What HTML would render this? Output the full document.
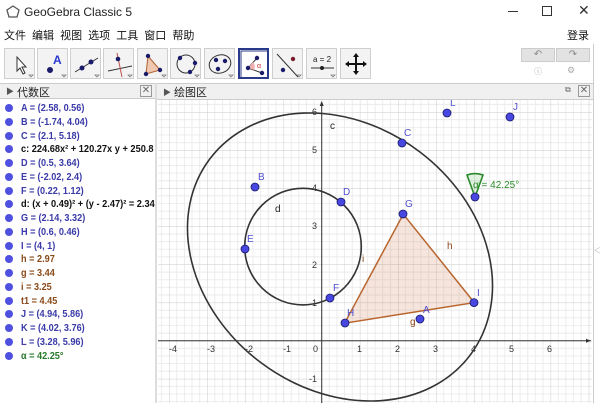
<!DOCTYPE html>
<html><head><meta charset="utf-8"><style>
*{margin:0;padding:0;box-sizing:border-box}
html,body{width:600px;height:403px;overflow:hidden}
body{background:#fff;font-family:"Liberation Sans","Noto Sans CJK SC",sans-serif;position:relative}
.a{position:absolute}
.btn{position:absolute;top:48px;width:31px;height:31px;background:#f3f3f3;border:1px solid #cfcfcf}
.btn svg{position:absolute;left:0;top:0}
.row{position:absolute;left:5px;font-size:10.5px;font-weight:bold;height:14px;line-height:14px;white-space:nowrap;overflow:hidden;width:150px}
.row:before{content:"";position:absolute;left:0;top:3px;width:8px;height:8px;border-radius:50%;background:#5050e0}
.row span{position:absolute;left:16px;top:0;transform:scaleX(0.87);transform-origin:0 0}
.row span.n{transform:scaleX(0.88)}
.b{color:#3a3aa8}.k{color:#111}.o{color:#8a4a1a}.g{color:#2a7a2a}
</style></head><body>
<div class="a" style="left:0;top:0;width:600px;height:25px;background:#fff"></div>
<svg class="a" style="left:6px;top:5px" width="14" height="14"><polygon points="7,1 13,5 11,12 3,12 1,5" fill="none" stroke="#555" stroke-width="1.3"/></svg>
<div class="a" style="left:24px;top:5px;font-size:12px;color:#222">GeoGebra Classic 5</div>
<div class="a" style="left:508px;top:11px;width:10px;height:1px;background:#333"></div>
<div class="a" style="left:542px;top:6px;width:10px;height:10px;border:1px solid #333"></div>
<div class="a" style="left:578px;top:2px;font-size:14px;color:#333">✕</div>
<div class="a" style="left:4px;top:27px;font-size:11px;color:#111;word-spacing:3px">文件 编辑 视图 选项 工具 窗口 帮助</div>
<div class="a" style="left:567px;top:27px;font-size:11px;color:#111">登录</div>
<div class="btn" style="left:4px"><svg width="31" height="31"><path d="M12 8 L12 22 L15 19 L18 25 L20 24 L17 18 L21 18 Z" fill="#fff" stroke="#333"/><path d="M24 26l2 2 2-2z" fill="none" stroke="#777" stroke-width=".7"/></svg></div>
<div class="btn" style="left:37px"><svg width="31" height="31"><circle cx="12" cy="21" r="3" fill="#1a1a6a"/><text x="15" y="15" font-size="12" font-weight="bold" fill="#2a3ad0" font-family="Liberation Sans">A</text><path d="M24 26l2 2 2-2z" fill="none" stroke="#777" stroke-width=".7"/></svg></div>
<div class="btn" style="left:70px"><svg width="31" height="31"><line x1="4" y1="23" x2="27" y2="9" stroke="#333"/><circle cx="11" cy="19" r="2.5" fill="#1a1a6a"/><circle cx="20" cy="13" r="2.5" fill="#1a1a6a"/><path d="M24 26l2 2 2-2z" fill="none" stroke="#777" stroke-width=".7"/></svg></div>
<div class="btn" style="left:103px"><svg width="31" height="31"><line x1="4" y1="22" x2="28" y2="17" stroke="#333"/><line x1="13" y1="4" x2="18" y2="28" stroke="#c05050"/><circle cx="14" cy="10" r="2.3" fill="#1a1a6a"/><path d="M24 26l2 2 2-2z" fill="none" stroke="#777" stroke-width=".7"/></svg></div>
<div class="btn" style="left:137px"><svg width="31" height="31"><polygon points="10,7 22,21 8,25" fill="#f0c8b0" stroke="#b06030"/><circle cx="10" cy="7" r="2.2" fill="#1a1a6a"/><circle cx="22" cy="21" r="2.2" fill="#1a1a6a"/><circle cx="8" cy="25" r="2.2" fill="#1a1a6a"/><path d="M24 26l2 2 2-2z" fill="none" stroke="#777" stroke-width=".7"/></svg></div>
<div class="btn" style="left:170px"><svg width="31" height="31"><circle cx="15" cy="15" r="9" fill="none" stroke="#333"/><circle cx="9" cy="9" r="2.2" fill="#1a1a6a"/><circle cx="24" cy="14" r="2.2" fill="#1a1a6a"/><circle cx="19" cy="23" r="2.2" fill="#1a1a6a"/><path d="M24 26l2 2 2-2z" fill="none" stroke="#777" stroke-width=".7"/></svg></div>
<div class="btn" style="left:204px"><svg width="31" height="31"><ellipse cx="15" cy="15" rx="11" ry="9" fill="none" stroke="#333" transform="rotate(-20 15 15)"/><circle cx="11" cy="11" r="2.2" fill="#1a1a6a"/><circle cx="20" cy="12" r="2.2" fill="#1a1a6a"/><circle cx="13" cy="20" r="2.2" fill="#1a1a6a"/><path d="M24 26l2 2 2-2z" fill="none" stroke="#777" stroke-width=".7"/></svg></div>
<div class="btn" style="left:238px;border:2px solid #2a3a8a;background:#fff"><svg width="29" height="29"><rect x="1" y="1" width="27" height="27" fill="none" stroke="#2a3a8a"/><line x1="8" y1="18" x2="17" y2="8" stroke="#333"/><line x1="8" y1="18" x2="22" y2="23" stroke="#333"/><path d="M13 12 A7 7 0 0 1 14 20 L8 18Z" fill="#f0b0b0"/><text x="17" y="18" font-size="7" fill="#c03030" font-family="Liberation Sans">α</text><circle cx="8" cy="18" r="2.2" fill="#1a1a6a"/><circle cx="17" cy="8" r="2.2" fill="#1a1a6a"/><circle cx="22" cy="23" r="2.2" fill="#1a1a6a"/></svg></div>
<div class="btn" style="left:272px"><svg width="31" height="31"><line x1="4" y1="5" x2="25" y2="28" stroke="#333"/><circle cx="20" cy="10" r="2.2" fill="#7a1a2a"/><circle cx="10" cy="21" r="2.2" fill="#1a1a6a"/><path d="M24 26l2 2 2-2z" fill="none" stroke="#777" stroke-width=".7"/></svg></div>
<div class="btn" style="left:306px"><svg width="31" height="31"><text x="6" y="13" font-size="8" fill="#222" font-family="Liberation Sans">a = 2</text><line x1="4" y1="19" x2="27" y2="19" stroke="#333"/><circle cx="15" cy="19" r="2" fill="#222"/><path d="M24 26l2 2 2-2z" fill="none" stroke="#777" stroke-width=".7"/></svg></div>
<div class="btn" style="left:340px"><svg width="31" height="31"><path d="M15 6v18M6 15h18" stroke="#111" stroke-width="2"/><path d="M15 4l-3 4h6zM15 26l-3-4h6zM4 15l4-3v6zM26 15l-4-3v6z" fill="#111"/></svg></div>
<div class="a" style="left:521px;top:48px;width:34px;height:14px;background:#e2e2e2;border:1px solid #ccc;font-size:10px;color:#888;text-align:center;line-height:12px">↶</div>
<div class="a" style="left:556px;top:48px;width:34px;height:14px;background:#e2e2e2;border:1px solid #ccc;font-size:10px;color:#888;text-align:center;line-height:12px">↷</div>
<div class="a" style="left:534px;top:66px;font-size:8px;color:#aaa">ⓘ</div>
<div class="a" style="left:567px;top:65px;font-size:9px;color:#aaa">⚙</div>
<div class="a" style="left:593px;top:44px;width:1px;height:359px;background:#ccc"></div>
<div class="a" style="left:0;top:83px;width:155px;height:16px;background:#f0f0f0;border-top:1px solid #ccc;border-bottom:1px solid #ccc"></div>
<div class="a" style="left:6px;top:86px;font-size:8px;color:#555">▶</div>
<div class="a" style="left:17px;top:84px;font-size:11px;color:#222">代数区</div>
<div class="a" style="left:140px;top:85px;width:12px;height:12px;border:1px solid #999;font-size:10px;line-height:10px;text-align:center;color:#666">✕</div>
<div class="a" style="left:155px;top:83px;width:2px;height:320px;background:#ddd"></div>
<div class="a" style="left:157px;top:83px;width:436px;height:17px;background:#f0f0f0;border-top:1px solid #ccc;border-bottom:1px solid #ccc"></div>
<div class="a" style="left:163px;top:87px;font-size:8px;color:#555">▶</div>
<div class="a" style="left:174px;top:84px;font-size:11px;color:#222">绘图区</div>
<div class="a" style="left:565px;top:85px;font-size:8px;color:#666">⧉</div>
<div class="a" style="left:578px;top:85px;width:12px;height:12px;border:1px solid #999;font-size:10px;line-height:10px;text-align:center;color:#666">✕</div>
<div class="a" style="left:594px;top:245px;font-size:8px;color:#888">◁</div>
<div class="row b" style="top:101px"><span>A = (2.58, 0.56)</span></div>
<div class="row b" style="top:115px"><span>B = (-1.74, 4.04)</span></div>
<div class="row b" style="top:129px"><span>C = (2.1, 5.18)</span></div>
<div class="row k" style="top:142px"><span class="n">c: 224.68x² + 120.27x y + 250.8</span></div>
<div class="row b" style="top:156px"><span>D = (0.5, 3.64)</span></div>
<div class="row b" style="top:170px"><span>E = (-2.02, 2.4)</span></div>
<div class="row b" style="top:184px"><span>F = (0.22, 1.12)</span></div>
<div class="row k" style="top:197px"><span class="n">d: (x + 0.49)² + (y - 2.47)² = 2.34</span></div>
<div class="row b" style="top:211px"><span>G = (2.14, 3.32)</span></div>
<div class="row b" style="top:225px"><span>H = (0.6, 0.46)</span></div>
<div class="row b" style="top:239px"><span>I = (4, 1)</span></div>
<div class="row o" style="top:252px"><span>h = 2.97</span></div>
<div class="row o" style="top:266px"><span>g = 3.44</span></div>
<div class="row o" style="top:280px"><span>i = 3.25</span></div>
<div class="row o" style="top:294px"><span>t1 = 4.45</span></div>
<div class="row b" style="top:307px"><span>J = (4.94, 5.86)</span></div>
<div class="row b" style="top:321px"><span>K = (4.02, 3.76)</span></div>
<div class="row b" style="top:335px"><span>L = (3.28, 5.96)</span></div>
<div class="row g" style="top:349px"><span>α = 42.25°</span></div>
<svg class="a" style="left:0;top:0" width="600" height="403">
<defs>
<pattern id="p" patternUnits="userSpaceOnUse" x="321.7" y="340.7" width="38.15" height="38.1">
<path d="M7.63 0V38.1M15.26 0V38.1M22.89 0V38.1M30.52 0V38.1M0 7.62H38.15M0 15.24H38.15M0 22.86H38.15M0 30.48H38.15" stroke="#e8e8e8" stroke-width=".8"/>
<path d="M0 0V38.1M0 0H38.15" stroke="#c8c8c8" stroke-width=".9"/>
</pattern>
<clipPath id="cl"><rect x="158" y="100" width="434" height="303"/></clipPath>
</defs>
<g clip-path="url(#cl)">
<rect x="158" y="100" width="434" height="303" fill="url(#p)"/>
<line x1="158" y1="340.7" x2="591" y2="340.7" stroke="#333"/>
<line x1="321.7" y1="403" x2="321.7" y2="102" stroke="#333"/>
<path d="M591 340.7l-5-2v4z M321.7 101l-2 5h4z" fill="#333"/>
<g font-size="9" fill="#333" font-family="Liberation Sans">
<text x="169" y="352">-4</text><text x="207" y="352">-3</text><text x="245" y="352">-2</text><text x="283" y="352">-1</text><text x="313" y="352">0</text>
<text x="357" y="352">1</text><text x="395" y="352">2</text><text x="433" y="352">3</text><text x="471" y="352">4</text><text x="509" y="352">5</text><text x="547" y="352">6</text>
<text x="312" y="306">1</text><text x="312" y="268">2</text><text x="312" y="229">3</text><text x="312" y="191">4</text><text x="312" y="153">5</text><text x="312" y="115">6</text><text x="309" y="382">-1</text>
</g>
<ellipse cx="340" cy="257" rx="163" ry="132" transform="rotate(37 340 257)" fill="none" stroke="#333" stroke-width="1.6"/>
<circle cx="303" cy="246.6" r="58.3" fill="none" stroke="#333" stroke-width="1.6"/>
<polygon points="344.6,323.2 403.3,214.2 474.3,302.6" fill="rgba(200,110,60,0.18)" stroke="#b8652e" stroke-width="1.5"/>
<path d="M475 197 L467 175 A23 23 0 0 1 483 175 Z" fill="rgba(60,160,60,0.15)" stroke="#2a8a2a" stroke-width="1.6"/>
<g fill="#4848e0" stroke="#1a1a6a" stroke-width=".8">
<circle cx="420" cy="319" r="4"/><circle cx="255" cy="187" r="4"/><circle cx="402" cy="143" r="4"/><circle cx="341" cy="202" r="4"/><circle cx="245" cy="249" r="4"/><circle cx="330" cy="298" r="4"/><circle cx="403" cy="214" r="4"/><circle cx="345" cy="323" r="4"/><circle cx="474" cy="302.6" r="4"/><circle cx="510" cy="117" r="4"/><circle cx="475" cy="197" r="4"/><circle cx="447" cy="113" r="4"/>
</g>
<g font-size="10" fill="#5050d0" font-family="Liberation Sans">
<text x="423" y="313">A</text><text x="258" y="180">B</text><text x="404" y="136">C</text><text x="343" y="195">D</text><text x="247" y="242">E</text><text x="333" y="291">F</text><text x="405" y="207">G</text><text x="347" y="316">H</text><text x="477" y="296">I</text><text x="513" y="110">J</text><text x="450" y="106">L</text>
</g>
<g font-size="10" font-family="Liberation Sans">
<text x="330" y="129" fill="#222">c</text><text x="275" y="212" fill="#222">d</text>
<text x="447" y="249" fill="#8a4a1a">h</text><text x="410" y="325" fill="#8a4a1a">g</text><text x="362" y="262" fill="#8a4a1a">i</text>
<text x="473" y="188" fill="#2a8a2a">α = 42.25°</text>
</g>
</g>
</svg>
</body></html>
